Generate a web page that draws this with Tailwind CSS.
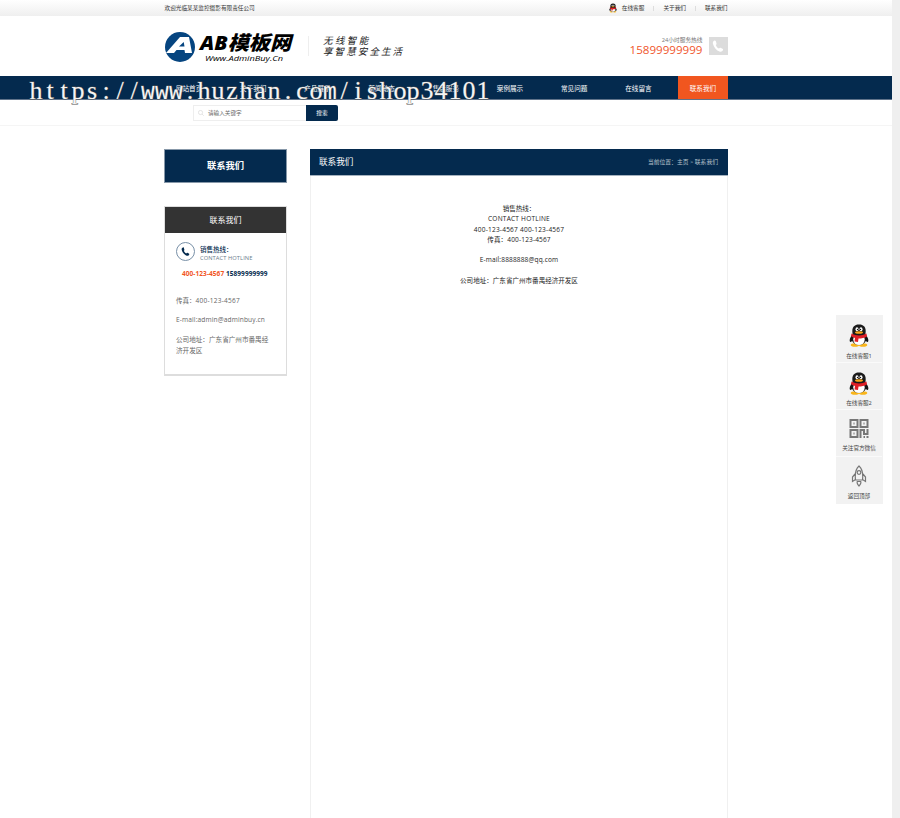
<!DOCTYPE html>
<html lang="zh">
<head>
  <meta charset="UTF-8" />
  <title>联系我们</title>
  <script src="https://cdn.jsdelivr.net/npm/@tailwindcss/browser@4"></script>
</head>
<body class="h-[818px] overflow-hidden bg-[#efefef] font-['Open_Sans','Noto_Sans_CJK_JP',sans-serif] text-[6.5px] text-[#333]">
  <!-- Shared symbols -->
  <svg class="hidden">
    <symbol id="penguin" viewBox="0 0 40 46">
      <path d="M8 20C2 26 0 32 2 36c3 0 5-3 6-5zM32 20c6 6 8 12 6 16-3 0-5-3-6-5z" fill="#151515"/>
      <ellipse cx="12" cy="42" rx="8.500" ry="3.500" fill="#f9b51a"/>
      <ellipse cx="28" cy="42" rx="8.500" ry="3.500" fill="#f9b51a"/>
      <ellipse cx="20" cy="28" rx="15" ry="14" fill="#151515"/>
      <ellipse cx="20" cy="31" rx="11.500" ry="11" fill="#fff"/>
      <path d="M7 19C5 6 11 1 20 1s15 5 13 18c-1 4-5 6-13 6S8 23 7 19z" fill="#1b1b1b"/>
      <ellipse cx="16" cy="10.500" rx="3" ry="4" fill="#fff"/>
      <ellipse cx="24" cy="10.500" rx="3" ry="4" fill="#fff"/>
      <circle cx="17" cy="11" r="1.400" fill="#111"/>
      <circle cx="23" cy="11" r="1.400" fill="#111"/>
      <ellipse cx="20" cy="17" rx="8" ry="2.600" fill="#f9a51a"/>
      <path d="M5 19c9 5 21 5 30 0l1 6c-5 3-11 4-17 4l-1 7-7-1 1-7c-3-1-6-2-8-4z" fill="#df1f26"/>
    </symbol>
    <symbol id="phone" viewBox="0 0 24 24">
      <path d="M5 1C2 2 1 5 2 8c2 7 7 13 13 15 3 1 6 0 7-3 .5-1 0-2-1-2.500l-4-2c-1-.5-2 0-3 1.500-3-1-5.500-4-6.500-7C9 9 9.500 8 9 7L7.500 2C7 1 6 .7 5 1z"/>
    </symbol>
  </svg>

  <div class="relative h-full w-[892px] bg-white">
    <!-- Top bar -->
    <div class="h-4 bg-linear-to-b from-white to-[#efefef]">
      <div class="ml-[164.5px] flex h-4 w-[563px] items-center justify-between text-[5.65px] whitespace-nowrap">
        <span>欢迎光临某某监控摄影有限责任公司</span>
        <div class="flex items-center">
          <svg class="mr-[5px] h-[10px] w-2"><use href="#penguin"/></svg>
          <span>在线客服</span>
          <span class="mx-[9px] h-[5px] w-px bg-[#ddd]"></span>
          <span>关于我们</span>
          <span class="mx-[9px] h-[5px] w-px bg-[#ddd]"></span>
          <span>联系我们</span>
        </div>
      </div>
    </div>

    <!-- Header -->
    <div class="ml-[165px] flex h-[60px] w-[562.5px] items-center">
      <svg class="mt-[1px] size-[30px]" viewBox="0 0 30 30">
        <circle cx="15" cy="15" r="15" fill="#064580"/>
        <path fill="#fff" fill-rule="evenodd" d="M1 21L15 5h9l3 16h-7l-.5-3h-8L9 21zM14 14.500h5.500l-.8-4.500z"/>
      </svg>
      <div class="ml-[5px] flex w-[94px] flex-col pt-[2px] text-black italic">
        <svg class="block h-[22px] w-[94px] overflow-visible">
          <text x="0" y="18" textLength="91" lengthAdjust="spacingAndGlyphs" font-size="19.500" font-weight="900">AB模板网</text>
        </svg>
        <svg class="block h-[9px] w-[94px] overflow-visible">
          <text x="5" y="6.500" textLength="78" lengthAdjust="spacingAndGlyphs" font-size="8" font-weight="500">Www.AdminBuy.Cn</text>
        </svg>
      </div>
      <div class="ml-[14px] h-5 w-px bg-[#eee]"></div>
      <div class="ml-[14px] pt-[2px] font-['Liberation_Serif','Noto_Sans_CJK_SC',serif] text-[9.500px] leading-[11px] whitespace-nowrap text-[#222] italic">
        <div class="tracking-[2.4px]">无线智能</div>
        <div class="tracking-[2.1px]">享智慧安全生活</div>
      </div>
      <div class="ml-auto pt-px text-right">
        <div class="h-[7px] text-[5.7px] leading-[7px] text-[#777]">24小时服务热线</div>
        <div class="text-[11.600px] leading-[12px] text-[#f0562c]">15899999999</div>
      </div>
      <div class="ml-[6px] flex h-[18px] w-[19px] items-center justify-center bg-[#dcdcdc] text-white">
        <svg class="size-3 fill-current"><use href="#phone"/></svg>
      </div>
    </div>

    <!-- Navigation -->
    <div class="h-6 border-b border-[#60738a] bg-[#042a4e]">
      <div class="ml-[157px] flex text-center text-[6.600px] leading-[25px] text-white">
        <span class="w-[64.200px]">网站首页</span>
        <span class="w-[64.200px]">关于我们</span>
        <span class="w-[64.200px]">产品展示</span>
        <span class="w-[64.200px]">新闻动态</span>
        <span class="w-[64.200px]">售后服务</span>
        <span class="w-[64.200px]">案例展示</span>
        <span class="w-[64.200px]">常见问题</span>
        <span class="w-[64.200px]">在线留言</span>
        <span class="ml-[7.400px] h-[23px] w-[50px] bg-[#f1561f]">联系我们</span>
      </div>
    </div>

    <!-- Search -->
    <div class="h-[26px] border-b border-[#f5f5f5] pt-[5px] pl-[193px]">
      <div class="flex h-4 w-[145px]">
        <div class="flex w-[113px] items-center border border-r-0 border-[#eee] pl-1">
          <svg class="size-[6px]" viewBox="0 0 12 12" fill="none" stroke="#ccc"><circle cx="5" cy="5" r="4.200"/><path d="M8 8l3.500 3.500"/></svg>
          <span class="ml-1 text-[5.6px] text-[#666]">请输入关键字</span>
        </div>
        <div class="flex-1 rounded-r-[2px] bg-[#042a4e] text-center text-[5.7px] leading-4 text-white">搜索</div>
      </div>
    </div>

    <!-- Main -->
    <div class="ml-[164px] flex pt-[23px]">
      <div class="w-[123px]">
        <div class="h-[34px] border border-[#8798a9] bg-[#042a4e] text-center text-[9.300px] leading-[32px] font-bold text-white">联系我们</div>
        <div class="mt-[23px] h-[170px] border border-b-2 border-[#ddd]">
          <div class="h-[26px] bg-[#333] text-center text-[8px] leading-[26px] text-white">联系我们</div>
          <div class="px-[11px] whitespace-nowrap text-[#666]">
            <div class="flex pt-[9px]">
              <div class="flex size-[19px] items-center justify-center rounded-full border border-[#7890a7] text-[#042a4e]">
                <svg class="size-[9px] fill-current"><use href="#phone"/></svg>
              </div>
              <div class="ml-[5px] pt-[4px] leading-2">
                <div class="text-[6.500px] font-medium text-[#042a4e]">销售热线：</div>
                <div class="text-[5.700px] tracking-[0.1px] text-[#6a7b8b]">CONTACT HOTLINE</div>
              </div>
            </div>
            <div class="mt-[7px] pl-[6px] text-[6.500px] leading-[10px] font-bold tracking-[0.07px] text-[#042a4e]"><span class="text-[#f1561f]">400-123-4567</span> 15899999999</div>
            <div class="mt-[17px] leading-[10px]">传真：<span class="tracking-[0.25px]">400-123-4567</span></div>
            <div class="mt-[9px] text-[6.600px] leading-[10px] tracking-[0.13px]">E-mail:admin@adminbuy.cn</div>
            <div class="mt-[9px] text-[6.600px] leading-[11px]">公司地址：广东省广州市番禺经<br>济开发区</div>
          </div>
        </div>
      </div>

      <div class="ml-[23px] h-[680px] w-[418px] border-x border-[#f0f0f0]">
        <div class="-mx-px flex h-[27px] items-center justify-between border-b border-[#a5b2bf] bg-[#042a4e] px-[9px]">
          <span class="text-[8.600px] text-white">联系我们</span>
          <span class="pr-px text-[5.800px] text-[#b5c0ca]">当前位置：主页 &gt; 联系我们</span>
        </div>
        <div class="pt-[28px] text-center text-[6.550px] leading-[10.300px] text-[#222]">
          <p>销售热线：</p>
          <p class="tracking-[0.22px]">CONTACT HOTLINE</p>
          <p class="tracking-[0.22px]">400-123-4567 400-123-4567</p>
          <p class="tracking-[0.15px]">传真：400-123-4567</p>
          <br>
          <p class="tracking-[0.15px]">E-mail:8888888@qq.com</p>
          <br>
          <p>公司地址：广东省广州市番禺经济开发区</p>
        </div>
      </div>
    </div>

    <!-- Floating service panel -->
    <div class="absolute top-[315px] left-[836px] grid w-[47px] grid-rows-[48px_47px_47px_47px] bg-[#f2f2f2] pr-px text-center text-[5.600px] whitespace-nowrap text-[#444]">
      <div class="border-b border-[#fafafa] pt-[9px]">
        <svg class="mx-auto h-[23px] w-5"><use href="#penguin"/></svg>
        <div class="mt-[5px] leading-2">在线客服1</div>
      </div>
      <div class="border-b border-[#fafafa] pt-[9px]">
        <svg class="mx-auto h-[23px] w-5"><use href="#penguin"/></svg>
        <div class="mt-[4px] leading-2">在线客服2</div>
      </div>
      <div class="border-b border-[#fafafa] pt-2">
        <svg class="mx-auto h-[21px] w-5" viewBox="0 0 20 20" fill="none" stroke="#777" stroke-width="2">
          <path d="M1.500 1.500h7v7h-7zM11.500 1.500h7v7h-7zM1.500 11.500h7v7h-7zM11.500 19.500v-8H15v4h3.500v-5M14.500 18.500h1.500M17.500 18.500h2"/>
          <path d="M4.500 5h1M14.500 5h1M4.500 15h1"/>
        </svg>
        <div class="mt-[5px] leading-2">关注官方微信</div>
      </div>
      <div class="pt-2">
        <svg class="mx-auto h-[22px] w-4" viewBox="0 0 16 22" fill="none" stroke="#777" stroke-width="1.200">
          <path d="M8 1C4.500 4 3.700 8 4.500 15h7C12.300 8 11.500 4 8 1zM4 9l-2.500 3v4.500l3-2M12 9l2.500 3v4.500l-3-2M6.300 16.500C5.500 18.500 7 19.500 8 21c1-1.500 2.500-2.500 1.700-4.500z"/>
          <circle cx="8" cy="7.500" r="1.800"/>
        </svg>
        <div class="mt-[5px] leading-2">返回顶部</div>
      </div>
    </div>

    <!-- Site watermark, one 14px cell per character -->
    <svg class="absolute top-[74px] left-[29px] h-9 w-[465px] overflow-visible font-['Liberation_Serif',serif] text-[26px]" fill="#f4f4f4" stroke="#555" stroke-width="0.8" paint-order="stroke" text-anchor="middle">
      <text y="25" x="7 21 35 49 63 77 91 105 119 133 147 161 175 189 203 217 231 245 259 273 287 301 315 329 343 357 371 384 398 412 426 440 454">https://<tspan class="font-['Liberation_Mono',monospace] text-[23px]">www</tspan>.huzhan.co<tspan class="font-['Liberation_Mono',monospace] text-[23px]">m</tspan>/ishop34101</text>
    </svg>
  </div>
</body>
</html>
